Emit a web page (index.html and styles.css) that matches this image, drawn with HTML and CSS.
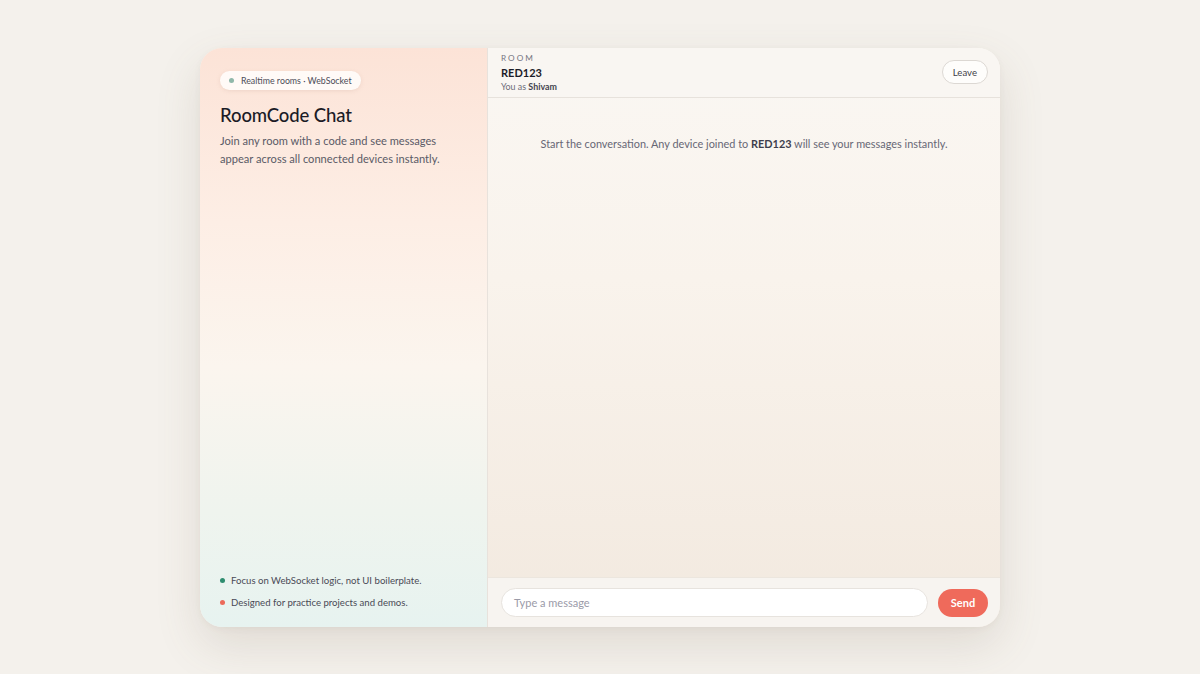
FILE: index.html
```html
<!DOCTYPE html>
<html>
<head>
<meta charset="utf-8">
<link rel="stylesheet" href="styles.css">
</head>
<body>
<div class="stage">
  <div class="card">
    <aside class="side">
      <div class="side-top">
        <div class="pill"><span class="pill-dot"></span>Realtime rooms · WebSocket</div>
        <h1 class="title">RoomCode Chat</h1>
        <p class="desc">Join any room with a code and see messages appear across all connected devices instantly.</p>
      </div>
      <ul class="notes">
        <li><span class="dot green"></span>Focus on WebSocket logic, not UI boilerplate.</li>
        <li><span class="dot coral"></span>Designed for practice projects and demos.</li>
      </ul>
    </aside>
    <section class="chat">
      <header class="chat-head">
        <div class="room-info">
          <div class="room-label">ROOM</div>
          <div class="room-code">RED123</div>
          <div class="room-user">You as <b>Shivam</b></div>
        </div>
        <button class="leave">Leave</button>
      </header>
      <div class="messages">
        <p class="empty">Start the conversation. Any device joined to <b>RED123</b> will see your messages instantly.</p>
      </div>
      <footer class="composer">
        <div class="input">Type a message</div>
        <button class="send">Send</button>
      </footer>
    </section>
  </div>
</div>
</body>
</html>
```
FILE: styles.css
```css
* { box-sizing: border-box; }
html, body { margin: 0; padding: 0; }
body {
  width: 1200px; height: 674px;
  background: #f4f1ec;
  font-family: "Lato", "Noto Sans", sans-serif;
  overflow: hidden;
}
.stage {
  height: 674px;
  display: flex;
  justify-content: center;
  padding-top: 48px;
}
.card {
  width: 800px; height: 579px;
  border-radius: 22px;
  overflow: hidden;
  display: flex;
  background: #f8f4ef;
  box-shadow: 0 18px 45px rgba(120, 100, 80, 0.16), 0 2px 6px rgba(120,100,80,0.06);
}
.side {
  width: 288px;
  flex: none;
  border-right: 1px solid #e8e2dc;
  background: linear-gradient(180deg, #fce3d7 0%, #fdeee5 30%, #fbf5ee 55%, #eff4ee 80%, #e7f3f0 100%);
  padding: 19px 20px 18px 20px;
  display: flex;
  flex-direction: column;
  justify-content: space-between;
}
.pill {
  align-self: flex-start;
  display: inline-flex;
  align-items: center;
  height: 19px;
  padding: 0 9px 0 9px;
  background: #fffaf7;
  border-radius: 10px;
  box-shadow: 0 1px 4px rgba(180, 140, 120, 0.18);
  font-size: 8.8px;
  color: #4c4c58;
  width: max-content;
}
.pill-dot {
  width: 5px; height: 5px; border-radius: 50%;
  background: #8fb8aa;
  margin-right: 7px;
}
.title {
  margin: 13px 0 0 0;
  font-size: 18.5px;
  font-weight: 500;
  color: #1b1b26;
  letter-spacing: -0.1px;
  line-height: 24px;
}
.desc {
  margin: 5px 0 0 0;
  font-size: 11.1px;
  line-height: 18px;
  color: #5a5a66;
}
.notes {
  list-style: none; margin: 0; padding: 0;
  display: flex; flex-direction: column; gap: 9px;
}
.notes li {
  display: flex; align-items: center;
  font-size: 9.6px; color: #4a4a56;
  line-height: 13px;
}
.dot { width: 5px; height: 5px; border-radius: 50%; margin-right: 6px; }
.dot.green { background: #2e8d6f; }
.dot.coral { background: #ec6a5a; }

.chat {
  flex: 1;
  display: flex;
  flex-direction: column;
  background: linear-gradient(180deg, #faf7f3 0%, #f9f3ec 40%, #f2e9df 100%);
}
.chat-head {
  height: 50px;
  flex: none;
  display: flex;
  align-items: center;
  justify-content: space-between;
  padding: 0 12px 0 13px;
  border-bottom: 1px solid #e7e2dc;
  background: #f9f6f2;
}
.room-info { display: flex; flex-direction: column; margin-top: 0px; }
.room-label { font-size: 8.2px; letter-spacing: 2px; color: #75757f; line-height: 10px; }
.room-code { font-size: 11px; font-weight: 700; color: #1c1c28; line-height: 17px; margin-top: 1px; }
.room-user { font-size: 8.9px; color: #6c6c78; line-height: 11px; }
.room-user b { color: #44444f; font-weight: 700; }
.leave {
  height: 24px; padding: 0 10px;
  border-radius: 12px;
  border: 1px solid #dcd8d3;
  background: #fefdfb;
  font-family: inherit;
  font-size: 9.6px;
  color: #3e3e4a;
  margin-top: -1px;
}
.messages {
  flex: 1;
  padding-top: 39px;
}
.empty {
  margin: 0;
  text-align: center;
  font-size: 10.9px;
  color: #676775;
}
.empty b { color: #3e3e4c; font-weight: 700; }
.composer {
  height: 50px; flex: none;
  display: flex; align-items: center; gap: 10px;
  padding: 0 12px 0 13px;
  background: #f7f4f0;
  border-top: 1px solid #ece6de;
}
.input {
  flex: 1; height: 29px;
  border-radius: 15px;
  background: #ffffff;
  border: 1px solid #e7e3de;
  display: flex; align-items: center;
  padding-left: 12px;
  font-size: 11px;
  color: #9a9aa8;
}
.send {
  width: 50px; height: 28px;
  border: none; border-radius: 14px;
  background: #ef6a5b;
  color: #ffffff;
  font-family: inherit;
  font-size: 11px;
  font-weight: 700;
}
```
